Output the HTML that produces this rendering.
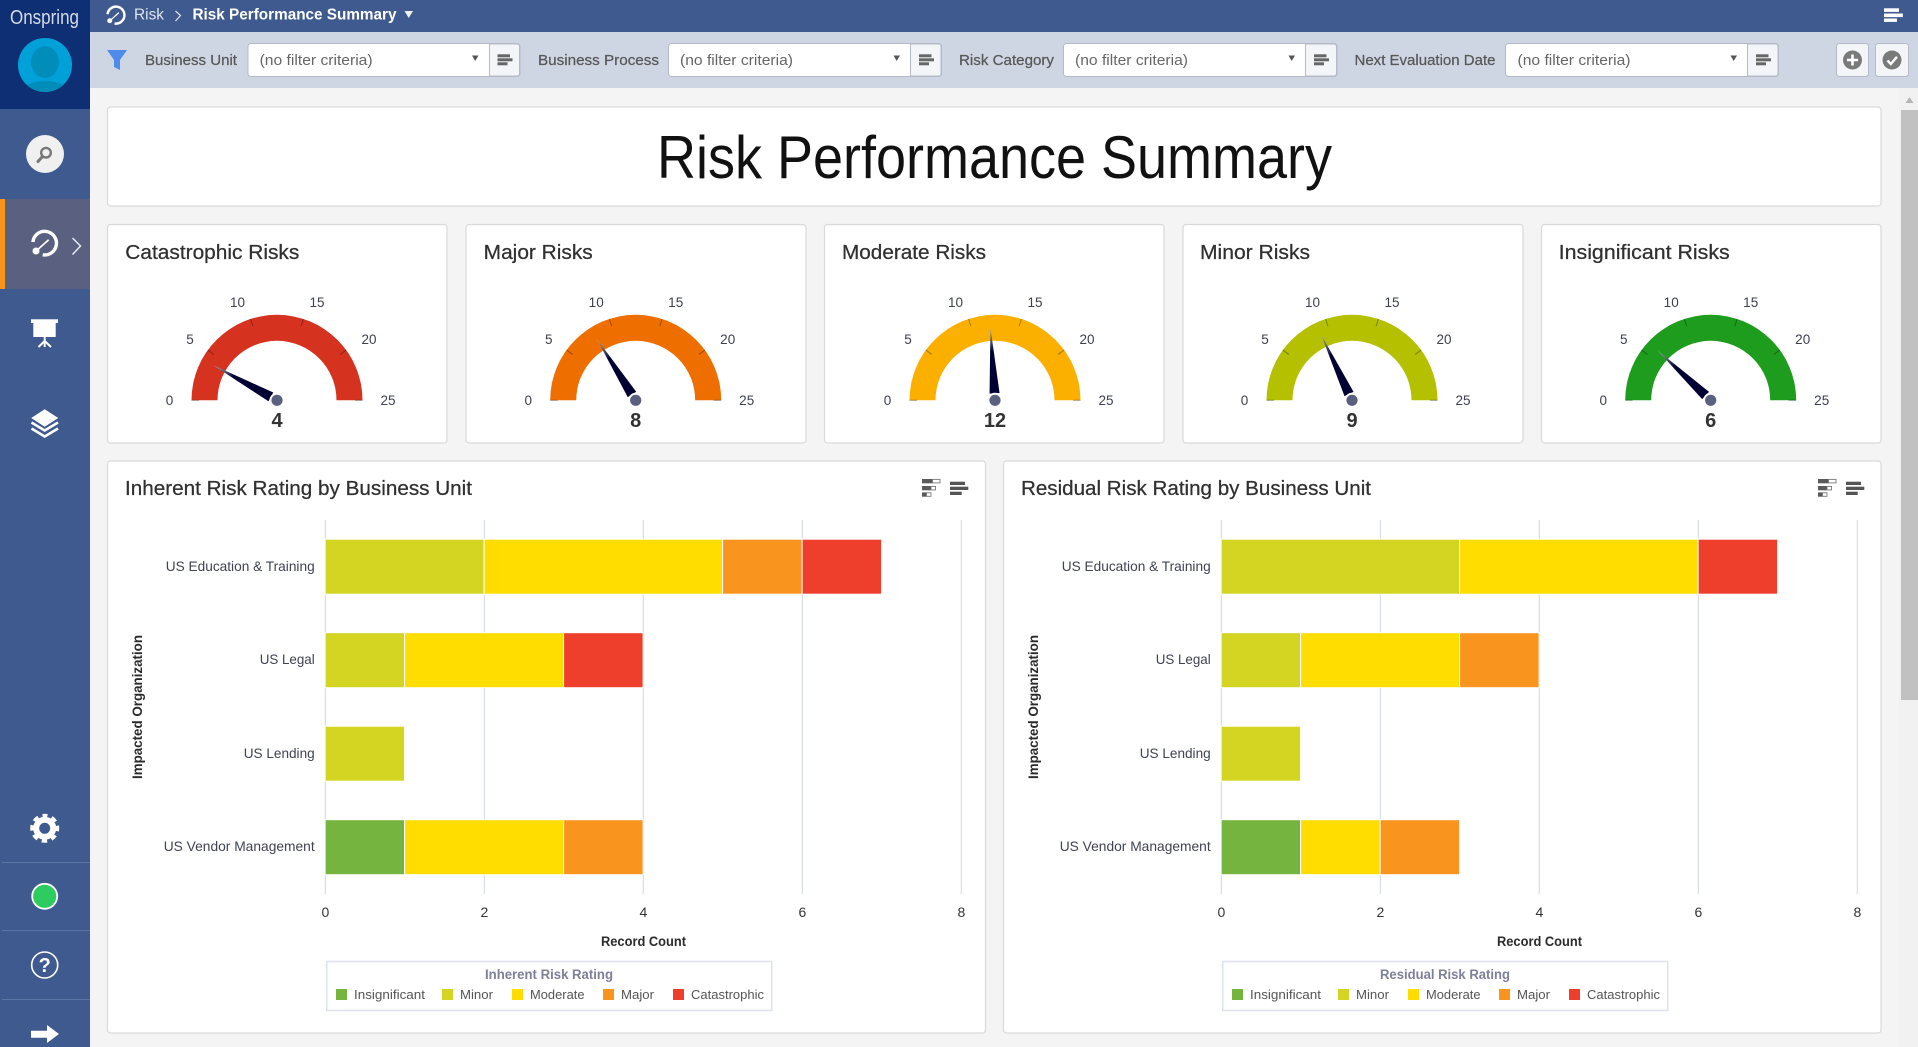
<!DOCTYPE html>
<html lang="en"><head><meta charset="utf-8"><title>Risk Performance Summary</title>
<style>
html,body{margin:0;padding:0;background:#f4f4f4;overflow:hidden}
svg{display:block}
text{font-family:"Liberation Sans",Arial,sans-serif}
.m{stroke:currentColor;stroke-width:.25}
.cat{font-size:14px;fill:#3f4352;text-anchor:end}
.tick{font-size:14px;fill:#333;text-anchor:middle}
.g{font-size:13.5px;fill:#3c4050;text-anchor:middle}
.val{font-size:20px;font-weight:bold;fill:#333;text-anchor:middle}
.ct{font-size:20px;fill:#303030;color:#303030}
.fl{font-size:15px;fill:#585858;color:#585858}
.fv{font-size:15px;fill:#666}
.lg{font-size:12.5px;fill:#555}
.lt{font-size:13.5px;font-weight:bold;fill:#7d8099;text-anchor:middle}
.ax{font-size:13.5px;font-weight:bold;fill:#2b2b2b}
</style></head><body>
<svg xmlns="http://www.w3.org/2000/svg" width="1918" height="1047" viewBox="0 0 1918 1047">
<defs>
<linearGradient id="nd" x1="0" x2="1" y1="0" y2="0"><stop offset="0" stop-color="#b0b0b8"/><stop offset=".2" stop-color="#555a70"/><stop offset=".36" stop-color="#000033"/><stop offset="1" stop-color="#000033"/></linearGradient>
<path id="arc" d="M-85.5 0A85.5 85.5 0 0 1 85.5 0L59.5 0A59.5 59.5 0 0 0-59.5 0Z"/>
<g id="tk" stroke="#000" stroke-opacity=".3" stroke-width="1.1"><path d="M-85.5 0H-78M85.5 0H78M-69.2-50.3L-63.1-45.8M69.2-50.3L63.1-45.8M-26.4-81.3L-24.1-74.2M26.4-81.3L24.1-74.2"/></g>
<g id="hub"><circle r="7.5" fill="#fff"/><circle r="5.6" fill="#5a6080"/></g>
<path id="nee" d="M-73 0L-7-5L-7 5Z" fill="url(#nd)"/>
<g id="ln"><rect x="0" y="0" width="12.500" height="3"/><rect x="0" y="4" width="15" height="3"/><rect x="0" y="8" width="10" height="3"/></g>
<g id="ringi"><path d="M-11.800-1A11.800 11.800 0 1 1-2 11.800" fill="none" stroke="#fff" stroke-width="3.400"/><circle cx="-8.700" cy="8" r="3.500" fill="#fff"/><path d="M-8 7.500L4-3.300" stroke="#fff" stroke-width="1.700"/></g>
</defs>

<rect width="1918" height="1047" fill="#f4f4f4"/>
<rect x="1899" y="88" width="19" height="959" fill="#f1f1f1"/>
<path d="M1905.500 103L1909.500 97L1913.500 103Z" fill="#b5b5b5"/>
<rect x="1901" y="110" width="17" height="590" fill="#c1c1c1"/>

<!-- top bar -->
<rect x="0" y="0" width="1918" height="32" fill="#3f5a8f"/>
<g transform="translate(116 15) scale(.72)"><use href="#ringi"/></g>
<text x="134" y="19.500" font-size="16" fill="#dfe4ee" textLength="30" lengthAdjust="spacingAndGlyphs">Risk</text>
<path d="M175.500 11L180.500 15.500L175.500 21" fill="none" stroke="#dfe4ee" stroke-width="1.200"/>
<text x="192.500" y="19.500" font-size="16" fill="#fff" font-weight="bold" textLength="204" lengthAdjust="spacingAndGlyphs">Risk Performance Summary</text>
<path d="M404.500 11H413L408.700 18Z" fill="#eef1f6"/>
<g fill="#fff"><rect x="1884" y="8.300" width="15" height="3.600"/><rect x="1884" y="13.500" width="18.800" height="3.600"/><rect x="1884" y="18.500" width="13" height="3.400"/></g>

<!-- filter bar -->
<rect x="90" y="32" width="1828" height="56" fill="#cfd6e3"/>
<path d="M107 50H127L120 60V70L114 67V60Z" fill="#4f8be8"/>

<text class="fl m" x="145" y="65" textLength="92" lengthAdjust="spacingAndGlyphs">Business Unit</text>
<rect x="248" y="43.500" width="272" height="33" rx="3" fill="#fff" stroke="#b4bac8"/>
<path d="M489.500 44H517a2.500 2.500 0 0 1 2.500 2.500V73.500a2.500 2.500 0 0 1-2.500 2.500H489.500Z" fill="#f3f5f8" stroke="#b4bac8"/>
<text class="fv" x="259.600" y="65" textLength="113" lengthAdjust="spacingAndGlyphs">(no filter criteria)</text>
<path d="M472 55.500H478.500L475.200 61Z" fill="#555"/>
<use href="#ln" x="497.500" y="54.300" fill="#666"/>

<text class="fl m" x="538" y="65" textLength="121" lengthAdjust="spacingAndGlyphs">Business Process</text>
<rect x="668.500" y="43.500" width="273" height="33" rx="3" fill="#fff" stroke="#b4bac8"/>
<path d="M910.500 44H938.500a2.500 2.500 0 0 1 2.500 2.500V73.500a2.500 2.500 0 0 1-2.500 2.500H910.500Z" fill="#f3f5f8" stroke="#b4bac8"/>
<text class="fv" x="680" y="65" textLength="113" lengthAdjust="spacingAndGlyphs">(no filter criteria)</text>
<path d="M893.500 55.500H900L896.700 61Z" fill="#555"/>
<use href="#ln" x="919" y="54.300" fill="#666"/>

<text class="fl m" x="959" y="65" textLength="95" lengthAdjust="spacingAndGlyphs">Risk Category</text>
<rect x="1063.500" y="43.500" width="273.500" height="33" rx="3" fill="#fff" stroke="#b4bac8"/>
<path d="M1305.500 44H1334a2.500 2.500 0 0 1 2.500 2.500V73.500a2.500 2.500 0 0 1-2.500 2.500H1305.500Z" fill="#f3f5f8" stroke="#b4bac8"/>
<text class="fv" x="1075" y="65" textLength="113" lengthAdjust="spacingAndGlyphs">(no filter criteria)</text>
<path d="M1288.500 55.500H1295L1291.700 61Z" fill="#555"/>
<use href="#ln" x="1314" y="54.300" fill="#666"/>

<text class="fl m" x="1354.500" y="65" textLength="141" lengthAdjust="spacingAndGlyphs">Next Evaluation Date</text>
<rect x="1505.500" y="43.500" width="273" height="33" rx="3" fill="#fff" stroke="#b4bac8"/>
<path d="M1747.500 44H1775.500a2.500 2.500 0 0 1 2.500 2.500V73.500a2.500 2.500 0 0 1-2.500 2.500H1747.500Z" fill="#f3f5f8" stroke="#b4bac8"/>
<text class="fv" x="1517.500" y="65" textLength="113" lengthAdjust="spacingAndGlyphs">(no filter criteria)</text>
<path d="M1730.500 55.500H1737L1733.700 61Z" fill="#555"/>
<use href="#ln" x="1756" y="54.300" fill="#666"/>

<rect x="1836.500" y="43.500" width="32" height="33" rx="3" fill="#f3f5f8" stroke="#b4bac8"/>
<circle cx="1852.500" cy="60" r="9.500" fill="#7a7a7a"/>
<path d="M1852.500 54.500V65.500M1847 60H1858" stroke="#fff" stroke-width="2.600"/>
<rect x="1875.500" y="43.500" width="33" height="33" rx="3" fill="#f3f5f8" stroke="#b4bac8"/>
<circle cx="1892" cy="60" r="9.500" fill="#7a7a7a"/>
<path d="M1887.500 60.500L1890.800 64L1897 56.800" fill="none" stroke="#fff" stroke-width="2.400"/>

<!-- sidebar -->
<rect x="0" y="0" width="90" height="1047" fill="#3f5a8f"/>
<rect x="0" y="0" width="90" height="109" fill="#0e2f73"/>
<text x="10" y="24" font-size="20" fill="#d5dbe8" textLength="69" lengthAdjust="spacingAndGlyphs">Onspring</text>
<clipPath id="av"><circle cx="45" cy="65" r="27"/></clipPath>
<circle cx="45" cy="65" r="27" fill="#00a1d9"/>
<g clip-path="url(#av)" fill="#008dba"><ellipse cx="45" cy="62" rx="14" ry="16"/><ellipse cx="45" cy="96" rx="27" ry="15"/></g>

<circle cx="45" cy="154" r="19" fill="#f0f0f0"/>
<circle cx="46" cy="152.700" r="4.800" fill="none" stroke="#777" stroke-width="2.400"/>
<path d="M42.500 156.500L38 161.500" stroke="#777" stroke-width="3" stroke-linecap="round"/>

<rect x="0" y="199" width="90" height="90" fill="#5a6080"/>
<rect x="0" y="199" width="5" height="90" fill="#f7941e"/>
<g transform="translate(44.700 243)"><use href="#ringi"/></g>
<path d="M72.500 238L80.500 246L72.500 254.500" fill="none" stroke="#e8eaf0" stroke-width="1.500"/>

<g fill="#fff"><rect x="31" y="319.300" width="27" height="3.700"/><rect x="33.300" y="323" width="22.400" height="14"/></g>
<path d="M44.700 337V347M44.700 341L38.500 347M44.700 341L51 347" stroke="#fff" stroke-width="2" fill="none"/>

<path d="M44.700 409.300L58.200 418L44.700 426.700L31.200 418Z" fill="#fff"/>
<path d="M31.500 422.500L44.700 430.500L58 422.500M31.500 428.500L44.700 436.500L58 428.500" fill="none" stroke="#fff" stroke-width="2.500"/>

<circle cx="44.700" cy="828.300" r="8.500" fill="none" stroke="#fff" stroke-width="6"/>
<circle cx="44.700" cy="828.300" r="12.500" fill="none" stroke="#fff" stroke-width="4" stroke-dasharray="5.400 4.420" stroke-dashoffset="2.700" transform="rotate(-90 44.700 828.300)"/>

<path d="M2 862.500H90M2 930.500H90M2 999.500H90" stroke="#5a74a3" stroke-width="1"/>
<circle cx="44.700" cy="896.300" r="12.500" fill="#2ecc60" stroke="#fff" stroke-width="1.800"/>
<circle cx="44.700" cy="965" r="13" fill="none" stroke="#fff" stroke-width="1.600"/>
<text x="44.700" y="972" font-size="20" font-weight="bold" fill="#fff" text-anchor="middle">?</text>
<path d="M31 1030.700H47V1025L59 1034L47 1043V1037.800H31Z" fill="#fff"/>

<!-- title card -->
<rect x="107.500" y="107" width="1773.500" height="99" rx="3" fill="#fff" stroke="#d9d9d9" stroke-width="1.200"/>
<text x="657" y="178" font-size="60" fill="#111" textLength="675" lengthAdjust="spacingAndGlyphs">Risk Performance Summary</text>

<!-- gauge cards -->
<g fill="#fff" stroke="#d9d9d9" stroke-width="1.200">
<rect x="107.500" y="224.500" width="339.500" height="218.500" rx="3"/>
<rect x="466" y="224.500" width="340" height="218.500" rx="3"/>
<rect x="824.500" y="224.500" width="339.500" height="218.500" rx="3"/>
<rect x="1183" y="224.500" width="340" height="218.500" rx="3"/>
<rect x="1541.500" y="224.500" width="339.500" height="218.500" rx="3"/>
</g>
<text class="ct m" x="125.300" y="259" textLength="174" lengthAdjust="spacingAndGlyphs">Catastrophic Risks</text>
<text class="ct m" x="483.700" y="259" textLength="109" lengthAdjust="spacingAndGlyphs">Major Risks</text>
<text class="ct m" x="842" y="259" textLength="144" lengthAdjust="spacingAndGlyphs">Moderate Risks</text>
<text class="ct m" x="1200" y="259" textLength="110" lengthAdjust="spacingAndGlyphs">Minor Risks</text>
<text class="ct m" x="1558.700" y="259" textLength="171" lengthAdjust="spacingAndGlyphs">Insignificant Risks</text>

<g transform="translate(277 400.300)">
<use href="#arc" fill="#d5331f"/><use href="#tk"/>
<use href="#nee" transform="rotate(28.800)"/><use href="#hub"/>
<text class="g" x="-107.500" y="4.500">0</text><text class="g" x="-87" y="-56.500">5</text><text class="g" x="-39.500" y="-93.500">10</text><text class="g" x="40" y="-93.500">15</text><text class="g" x="92" y="-56.500">20</text><text class="g" x="111" y="4.500">25</text>
<text class="val" y="26.500">4</text>
</g>
<g transform="translate(635.700 400.300)">
<use href="#arc" fill="#ee6f00"/><use href="#tk"/>
<use href="#nee" transform="rotate(57.600)"/><use href="#hub"/>
<text class="g" x="-107.500" y="4.500">0</text><text class="g" x="-87" y="-56.500">5</text><text class="g" x="-39.500" y="-93.500">10</text><text class="g" x="40" y="-93.500">15</text><text class="g" x="92" y="-56.500">20</text><text class="g" x="111" y="4.500">25</text>
<text class="val" y="26.500">8</text>
</g>
<g transform="translate(995 400.300)">
<use href="#arc" fill="#fbb000"/><use href="#tk"/>
<use href="#nee" transform="rotate(86.400)"/><use href="#hub"/>
<text class="g" x="-107.500" y="4.500">0</text><text class="g" x="-87" y="-56.500">5</text><text class="g" x="-39.500" y="-93.500">10</text><text class="g" x="40" y="-93.500">15</text><text class="g" x="92" y="-56.500">20</text><text class="g" x="111" y="4.500">25</text>
<text class="val" y="26.500">12</text>
</g>
<g transform="translate(1352 400.300)">
<use href="#arc" fill="#b4c000"/><use href="#tk"/>
<use href="#nee" transform="rotate(64.800)"/><use href="#hub"/>
<text class="g" x="-107.500" y="4.500">0</text><text class="g" x="-87" y="-56.500">5</text><text class="g" x="-39.500" y="-93.500">10</text><text class="g" x="40" y="-93.500">15</text><text class="g" x="92" y="-56.500">20</text><text class="g" x="111" y="4.500">25</text>
<text class="val" y="26.500">9</text>
</g>
<g transform="translate(1710.700 400.300)">
<use href="#arc" fill="#1e9c1e"/><use href="#tk"/>
<use href="#nee" transform="rotate(43.200)"/><use href="#hub"/>
<text class="g" x="-107.500" y="4.500">0</text><text class="g" x="-87" y="-56.500">5</text><text class="g" x="-39.500" y="-93.500">10</text><text class="g" x="40" y="-93.500">15</text><text class="g" x="92" y="-56.500">20</text><text class="g" x="111" y="4.500">25</text>
<text class="val" y="26.500">6</text>
</g>

<!-- chart 1 -->
<g>
<rect x="107.500" y="461" width="878" height="572" rx="3" fill="#fff" stroke="#d9d9d9" stroke-width="1.200"/>
<text class="ct m" x="125" y="495" textLength="347" lengthAdjust="spacingAndGlyphs">Inherent Risk Rating by Business Unit</text>
<g fill="#5a5a5a"><rect x="922" y="479" width="10.500" height="4.300"/><rect x="922" y="486" width="9" height="4.300"/><rect x="922" y="492.400" width="4.500" height="4.300"/></g>
<g fill="none" stroke="#777" stroke-width=".9"><rect x="932.500" y="479.400" width="7.500" height="3.500"/><rect x="931" y="486.400" width="4.500" height="3.500"/><rect x="926.500" y="492.800" width="4.500" height="3.500"/></g>
<g fill="#555"><rect x="950" y="481.700" width="15" height="3.300"/><rect x="950" y="486.700" width="18.300" height="3.300"/><rect x="950" y="491.700" width="11.700" height="3.300"/></g>
<path d="M325.400 520V894M484.400 520V894M643.400 520V894M802.400 520V894M961.400 520V894" stroke="#d8deea" stroke-width="1.300"/>
<g stroke="#fff" stroke-width="1" transform="translate(-.3 -.3)">
<rect x="325.400" y="539.500" width="159" height="55" fill="#d4d422"/><rect x="484.400" y="539.500" width="238.500" height="55" fill="#ffdd00"/><rect x="722.900" y="539.500" width="79.500" height="55" fill="#f9951f"/><rect x="802.400" y="539.500" width="79.500" height="55" fill="#ee3f2c"/>
<rect x="325.400" y="633" width="79.500" height="55" fill="#d4d422"/><rect x="404.900" y="633" width="159" height="55" fill="#ffdd00"/><rect x="563.900" y="633" width="79.500" height="55" fill="#ee3f2c"/>
<rect x="325.400" y="726.500" width="79.500" height="55" fill="#d4d422"/>
<rect x="325.400" y="820" width="79.500" height="55" fill="#74b43f"/><rect x="404.900" y="820" width="159" height="55" fill="#ffdd00"/><rect x="563.900" y="820" width="79.500" height="55" fill="#f9951f"/>
</g>
<text class="cat" x="314.700" y="571" textLength="149" lengthAdjust="spacingAndGlyphs">US Education &amp; Training</text>
<text class="cat" x="314.700" y="664" textLength="55" lengthAdjust="spacingAndGlyphs">US Legal</text>
<text class="cat" x="314.700" y="758" textLength="71" lengthAdjust="spacingAndGlyphs">US Lending</text>
<text class="cat" x="314.700" y="851" textLength="151" lengthAdjust="spacingAndGlyphs">US Vendor Management</text>
<text class="ax" transform="translate(142 779) rotate(-90)" textLength="144" lengthAdjust="spacingAndGlyphs">Impacted Organization</text>
<text class="tick" x="325.400" y="917">0</text><text class="tick" x="484.400" y="917">2</text><text class="tick" x="643.400" y="917">4</text><text class="tick" x="802.400" y="917">6</text><text class="tick" x="961.400" y="917">8</text>
<text class="ax" x="601" y="946" textLength="85" lengthAdjust="spacingAndGlyphs">Record Count</text>
<rect x="326.700" y="961.500" width="445" height="49" fill="#fff" stroke="#dde3ee" stroke-width="1.600"/>
<text class="lt" x="549" y="979" textLength="128" lengthAdjust="spacingAndGlyphs">Inherent Risk Rating</text>
<rect x="336" y="989" width="11" height="11" fill="#74b43f"/><text class="lg" x="354" y="999" textLength="71" lengthAdjust="spacingAndGlyphs">Insignificant</text>
<rect x="442" y="989" width="11" height="11" fill="#d4d422"/><text class="lg" x="460" y="999" textLength="33" lengthAdjust="spacingAndGlyphs">Minor</text>
<rect x="512" y="989" width="11" height="11" fill="#ffdd00"/><text class="lg" x="530" y="999" textLength="54.500" lengthAdjust="spacingAndGlyphs">Moderate</text>
<rect x="603" y="989" width="11" height="11" fill="#f9951f"/><text class="lg" x="621" y="999" textLength="33" lengthAdjust="spacingAndGlyphs">Major</text>
<rect x="673" y="989" width="11" height="11" fill="#ee3f2c"/><text class="lg" x="691" y="999" textLength="73" lengthAdjust="spacingAndGlyphs">Catastrophic</text>
</g>

<!-- chart 2 -->
<g transform="translate(896 0)">
<rect x="107.500" y="461" width="877.500" height="572" rx="3" fill="#fff" stroke="#d9d9d9" stroke-width="1.200"/>
<text class="ct m" x="125" y="495" textLength="350" lengthAdjust="spacingAndGlyphs">Residual Risk Rating by Business Unit</text>
<g fill="#5a5a5a"><rect x="922" y="479" width="10.500" height="4.300"/><rect x="922" y="486" width="9" height="4.300"/><rect x="922" y="492.400" width="4.500" height="4.300"/></g>
<g fill="none" stroke="#777" stroke-width=".9"><rect x="932.500" y="479.400" width="7.500" height="3.500"/><rect x="931" y="486.400" width="4.500" height="3.500"/><rect x="926.500" y="492.800" width="4.500" height="3.500"/></g>
<g fill="#555"><rect x="950" y="481.700" width="15" height="3.300"/><rect x="950" y="486.700" width="18.300" height="3.300"/><rect x="950" y="491.700" width="11.700" height="3.300"/></g>
<path d="M325.400 520V894M484.400 520V894M643.400 520V894M802.400 520V894M961.400 520V894" stroke="#d8deea" stroke-width="1.300"/>
<g stroke="#fff" stroke-width="1" transform="translate(-.3 -.3)">
<rect x="325.400" y="539.500" width="238.500" height="55" fill="#d4d422"/><rect x="563.900" y="539.500" width="238.500" height="55" fill="#ffdd00"/><rect x="802.400" y="539.500" width="79.500" height="55" fill="#ee3f2c"/>
<rect x="325.400" y="633" width="79.500" height="55" fill="#d4d422"/><rect x="404.900" y="633" width="159" height="55" fill="#ffdd00"/><rect x="563.900" y="633" width="79.500" height="55" fill="#f9951f"/>
<rect x="325.400" y="726.500" width="79.500" height="55" fill="#d4d422"/>
<rect x="325.400" y="820" width="79.500" height="55" fill="#74b43f"/><rect x="404.900" y="820" width="79.500" height="55" fill="#ffdd00"/><rect x="484.400" y="820" width="79.500" height="55" fill="#f9951f"/>
</g>
<text class="cat" x="314.700" y="571" textLength="149" lengthAdjust="spacingAndGlyphs">US Education &amp; Training</text>
<text class="cat" x="314.700" y="664" textLength="55" lengthAdjust="spacingAndGlyphs">US Legal</text>
<text class="cat" x="314.700" y="758" textLength="71" lengthAdjust="spacingAndGlyphs">US Lending</text>
<text class="cat" x="314.700" y="851" textLength="151" lengthAdjust="spacingAndGlyphs">US Vendor Management</text>
<text class="ax" transform="translate(142 779) rotate(-90)" textLength="144" lengthAdjust="spacingAndGlyphs">Impacted Organization</text>
<text class="tick" x="325.400" y="917">0</text><text class="tick" x="484.400" y="917">2</text><text class="tick" x="643.400" y="917">4</text><text class="tick" x="802.400" y="917">6</text><text class="tick" x="961.400" y="917">8</text>
<text class="ax" x="601" y="946" textLength="85" lengthAdjust="spacingAndGlyphs">Record Count</text>
<rect x="326.700" y="961.500" width="445" height="49" fill="#fff" stroke="#dde3ee" stroke-width="1.600"/>
<text class="lt" x="549" y="979" textLength="130" lengthAdjust="spacingAndGlyphs">Residual Risk Rating</text>
<rect x="336" y="989" width="11" height="11" fill="#74b43f"/><text class="lg" x="354" y="999" textLength="71" lengthAdjust="spacingAndGlyphs">Insignificant</text>
<rect x="442" y="989" width="11" height="11" fill="#d4d422"/><text class="lg" x="460" y="999" textLength="33" lengthAdjust="spacingAndGlyphs">Minor</text>
<rect x="512" y="989" width="11" height="11" fill="#ffdd00"/><text class="lg" x="530" y="999" textLength="54.500" lengthAdjust="spacingAndGlyphs">Moderate</text>
<rect x="603" y="989" width="11" height="11" fill="#f9951f"/><text class="lg" x="621" y="999" textLength="33" lengthAdjust="spacingAndGlyphs">Major</text>
<rect x="673" y="989" width="11" height="11" fill="#ee3f2c"/><text class="lg" x="691" y="999" textLength="73" lengthAdjust="spacingAndGlyphs">Catastrophic</text>
</g>
</svg>
</body></html>
